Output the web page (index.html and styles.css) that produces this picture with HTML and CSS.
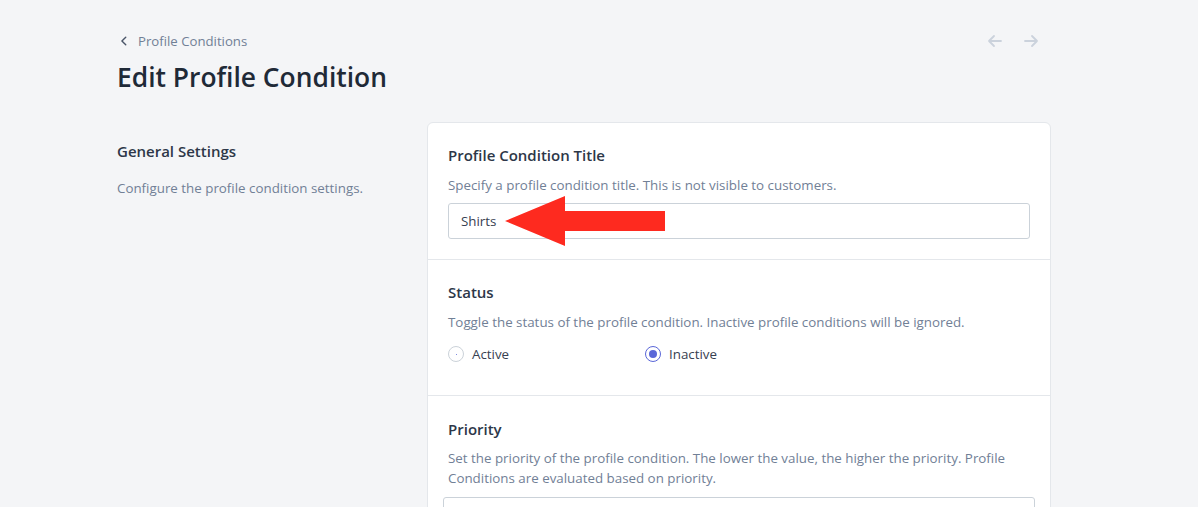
FILE: index.html
```html
<!DOCTYPE html>
<html lang="en">
<head>
<meta charset="utf-8">
<title>Edit Profile Condition</title>
<link rel="stylesheet" href="styles.css">
</head>
<body>
<div class="page">
  <header class="header">
    <div class="header-left">
      <a class="crumb" href="#">
        <svg class="crumb-icon" viewBox="0 0 20 20" width="14" height="14"><path d="M12.5 4.5 7 10l5.5 5.5" fill="none" stroke="currentColor" stroke-width="2" stroke-linecap="round" stroke-linejoin="round"/></svg>
        <span>Profile Conditions</span>
      </a>
      <h1 class="title">Edit Profile Condition</h1>
    </div>
    <div class="pager">
      <svg viewBox="0 0 20 20" width="20" height="20"><path d="M16 10H4M9 5 4 10l5 5" fill="none" stroke="currentColor" stroke-width="1.8" stroke-linecap="round" stroke-linejoin="round"/></svg>
      <svg viewBox="0 0 20 20" width="20" height="20"><path d="M4 10h12M11 5l5 5-5 5" fill="none" stroke="currentColor" stroke-width="1.8" stroke-linecap="round" stroke-linejoin="round"/></svg>
    </div>
  </header>

  <div class="layout">
    <aside class="aside">
      <h2 class="aside-title">General Settings</h2>
      <p class="aside-desc">Configure the profile condition settings.</p>
    </aside>

    <div class="card">
      <section class="section section-title">
        <h3 class="label">Profile Condition Title</h3>
        <p class="help">Specify a profile condition title. This is not visible to customers.</p>
        <div class="input-wrap">
          <div class="input">Shirts</div>
          <svg class="annot-arrow" viewBox="0 0 162 52" width="162" height="52"><polygon points="0,26 60,1 60,16 160,16 160,36 60,36 60,51" fill="#fe2a1f"/></svg>
        </div>
      </section>

      <section class="section">
        <h3 class="label">Status</h3>
        <p class="help">Toggle the status of the profile condition. Inactive profile conditions will be ignored.</p>
        <div class="radios">
          <label class="radio"><span class="dot"></span>Active</label>
          <label class="radio"><span class="dot checked"></span>Inactive</label>
        </div>
      </section>

      <section class="section section-priority">
        <h3 class="label">Priority</h3>
        <p class="help">Set the priority of the profile condition. The lower the value, the higher the priority. Profile Conditions are evaluated based on priority.</p>
        <div class="input input-wide"></div>
      </section>
    </div>
  </div>
</div>
</body>
</html>
```

FILE: styles.css
```css
* { box-sizing: border-box; }
html, body { margin: 0; padding: 0; }
body {
  background: #f4f5f7;
  font-family: "Open Sans", "Liberation Sans", sans-serif;
  color: #1f2937;
  height: 507px;
  overflow: hidden;
}
.page {
  width: 934px;
  margin-left: 117px;
  padding-top: 31px;
}
.header {
  display: flex;
  justify-content: space-between;
  align-items: flex-start;
}
.crumb {
  display: flex;
  align-items: center;
  gap: 7px;
  color: #718096;
  text-decoration: none;
  font-size: 13.2px;
  line-height: 20px;
}
.crumb-icon { color: #4a5568; }
.title {
  margin: 9px 0 0;
  font-size: 26.4px;
  font-weight: 600;
  color: #1f2a37;
  line-height: 34px;
}
.pager {
  display: flex;
  gap: 16px;
  color: #cbd2dc;
  margin-right: 10px;
}
.layout {
  display: grid;
  grid-template-columns: 310px 1fr;
  margin-top: 28px;
}
.aside-title {
  margin: 19px 0 0;
  font-size: 15px;
  font-weight: 600;
  color: #2d3748;
  line-height: 20px;
}
.aside-desc {
  margin: 17px 0 0;
  font-size: 13.35px;
  color: #718096;
  line-height: 20px;
}
.card {
  background: #fff;
  border: 1px solid #e4e7eb;
  border-radius: 6px;
  overflow: hidden;
}
.section {
  padding: 22px 20px 20px;
  border-bottom: 1px solid #e4e7eb;
}
.section:last-child { border-bottom: 0; }
.label {
  margin: 0;
  font-size: 15px;
  font-weight: 600;
  color: #2d3748;
  line-height: 20px;
}
.help {
  margin: 10px 0 0;
  font-size: 13.35px;
  color: #718096;
  line-height: 20px;
}
.input-wrap { position: relative; margin-top: 8px; }
.input {
  height: 36px;
  border: 1px solid #cbd2d9;
  border-radius: 3px;
  padding: 0 12px;
  display: flex;
  align-items: center;
  font-size: 13.35px;
  color: #374151;
  background: #fff;
}
.annot-arrow {
  position: absolute;
  left: 57px;
  top: -8px;
}
.radios {
  display: grid;
  grid-template-columns: 197px 197px;
  margin-top: 12px;
  padding-bottom: 11px;
}
.radio {
  display: flex;
  align-items: center;
  gap: 8px;
  font-size: 13.35px;
  color: #374151;
  line-height: 20px;
}
.dot {
  width: 16px;
  height: 16px;
  border-radius: 50%;
  border: 1px solid #cbd2d9;
  background: #fff;
  position: relative;
}
.dot::after {
  content: "";
  position: absolute;
  left: 6.5px; top: 6.5px;
  width: 1px; height: 1px;
  border-radius: 50%;
  background: #5a67d8;
}
.dot.checked { border-color: #5a67d8; }
.dot.checked::after {
  left: 3px; top: 3px;
  width: 8px; height: 8px;
  background: #5a67d8;
}
.section-priority { padding-top: 23px; }
.section-priority .help { margin-top: 9px; }
.input-wide {
  margin: 9px -5px 0;
  height: 40px;
}
```
